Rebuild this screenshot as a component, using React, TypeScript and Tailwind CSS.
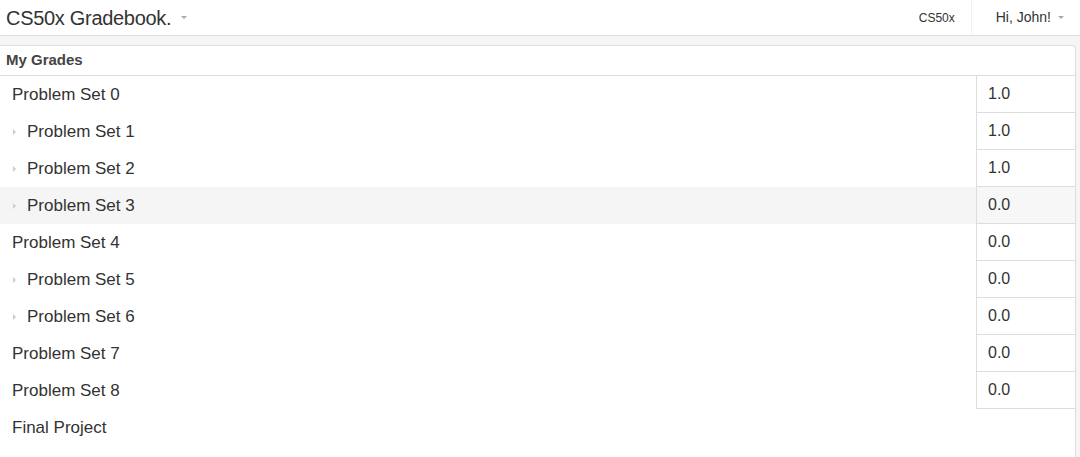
import React from "react";

type Grade = { name: string; score?: string; expandable?: boolean; active?: boolean };

const grades: Grade[] = [
  { name: "Problem Set 0", score: "1.0" },
  { name: "Problem Set 1", score: "1.0", expandable: true },
  { name: "Problem Set 2", score: "1.0", expandable: true },
  { name: "Problem Set 3", score: "0.0", expandable: true, active: true },
  { name: "Problem Set 4", score: "0.0" },
  { name: "Problem Set 5", score: "0.0", expandable: true },
  { name: "Problem Set 6", score: "0.0", expandable: true },
  { name: "Problem Set 7", score: "0.0" },
  { name: "Problem Set 8", score: "0.0" },
  { name: "Final Project" },
];

function Caret() {
  return <span className="ml-[10px] inline-block h-0 w-0 border-x-[3px] border-t-[3px] border-x-transparent border-t-[#aaa] align-middle" />;
}

function Row({ g }: { g: Grade }) {
  return (
    <div className={`flex h-[37px] ${g.active ? "bg-[#f5f5f5]" : ""}`}>
      <div className="flex flex-1 items-center pl-[12px] text-[17px] text-[#333]">
        {g.expandable && (
          <span className="mr-[11px] ml-[1px] inline-block h-0 w-0 border-y-[3px] border-l-[3px] border-y-transparent border-l-[#ccc]" />
        )}
        <span>{g.name}</span>
      </div>
      {g.score && (
        <div className={`flex w-[99px] items-center border-b border-l border-[#ddd] pl-[11px] text-[16px] text-[#333] ${g.active ? "bg-[#f7f7f7]" : ""}`}>
          {g.score}
        </div>
      )}
    </div>
  );
}

export default function App() {
  return (
    <div className="min-h-screen bg-[#f5f5f5] font-['Liberation_Sans',Arial,sans-serif]">
      {/* Navbar */}
      <div className="flex h-[36px] items-center border-b border-[#ddd] bg-white">
        <div className="flex items-center pl-[6px] text-[20px] tracking-[-0.3px] text-[#333]">
          CS50x Gradebook.
          <Caret />
        </div>
        <div className="ml-auto flex h-full items-center">
          <div className="flex h-full items-center pr-[16px] text-[12px] text-[#333]">CS50x</div>
          <div className="flex h-full items-center border-l border-[#f0f0f0] pl-[24px] pr-[16px] text-[14px] text-[#333]">
            Hi, John!
            <span className="ml-[7px] inline-block h-0 w-0 border-x-[3px] border-t-[3px] border-x-transparent border-t-[#aaa]" />
          </div>
        </div>
      </div>

      {/* Panel */}
      <div className="mr-[4px] mt-[9px] rounded-tr-[4px] border border-l-0 border-[#ddd] bg-white pb-[40px]">
        <div className="flex h-[30px] items-center border-b border-[#ddd] pl-[6px] text-[15px] font-bold text-[#444]">
          My Grades
        </div>
        {grades.map((g) => (
          <Row key={g.name} g={g} />
        ))}
      </div>
    </div>
  );
}
